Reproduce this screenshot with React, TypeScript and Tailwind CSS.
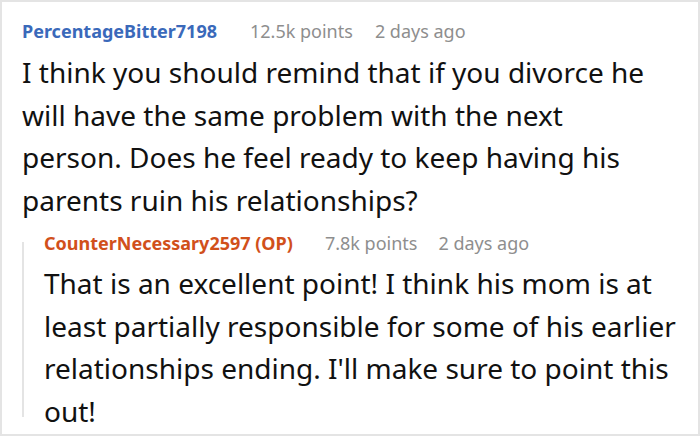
export default function App() {
  return (
    <div
      className="w-[700px] h-[436px] overflow-hidden border-2 border-[#e4e4e4] bg-white pl-[20px] pr-[16px] pt-[17px] text-[#111]"
      style={{ fontFamily: '"Noto Sans", sans-serif' }}
    >
      <div className="flex items-center h-[24px] leading-[24px]">
        <span className="text-[18px] font-bold text-[#3a69ba]">PercentageBitter7198</span>
        <span className="ml-[33px] text-[18px] text-[#8e8e8e]">12.5k points</span>
        <span className="ml-[22px] text-[18px] text-[#8e8e8e]">2 days ago</span>
      </div>
      <p className="mt-[8px] w-[630px] text-[28px] leading-[42.5px]">
        I think you should remind that if you divorce he will have the same problem with the next
        person. Does he feel ready to keep having his parents ruin his relationships?
      </p>
      <div className="mt-[10px] flex">
        <div className="w-[2px] bg-[#e4e4e4] mt-[11px] mb-[15px]" />
        <div className="pl-[20px] flex-1">
          <div className="flex items-center h-[24px] leading-[24px]">
            <span className="text-[18px] font-bold text-[#d1501b]">CounterNecessary2597 (OP)</span>
            <span className="ml-[32px] text-[18px] text-[#8e8e8e]">7.8k points</span>
            <span className="ml-[21px] text-[18px] text-[#8e8e8e]">2 days ago</span>
          </div>
          <p className="mt-[7px] text-[28px] leading-[42.5px]">
            That is an excellent point! I think his mom is at least partially responsible for some of
            his earlier relationships ending. I'll make sure to point this out!
          </p>
        </div>
      </div>
    </div>
  );
}
